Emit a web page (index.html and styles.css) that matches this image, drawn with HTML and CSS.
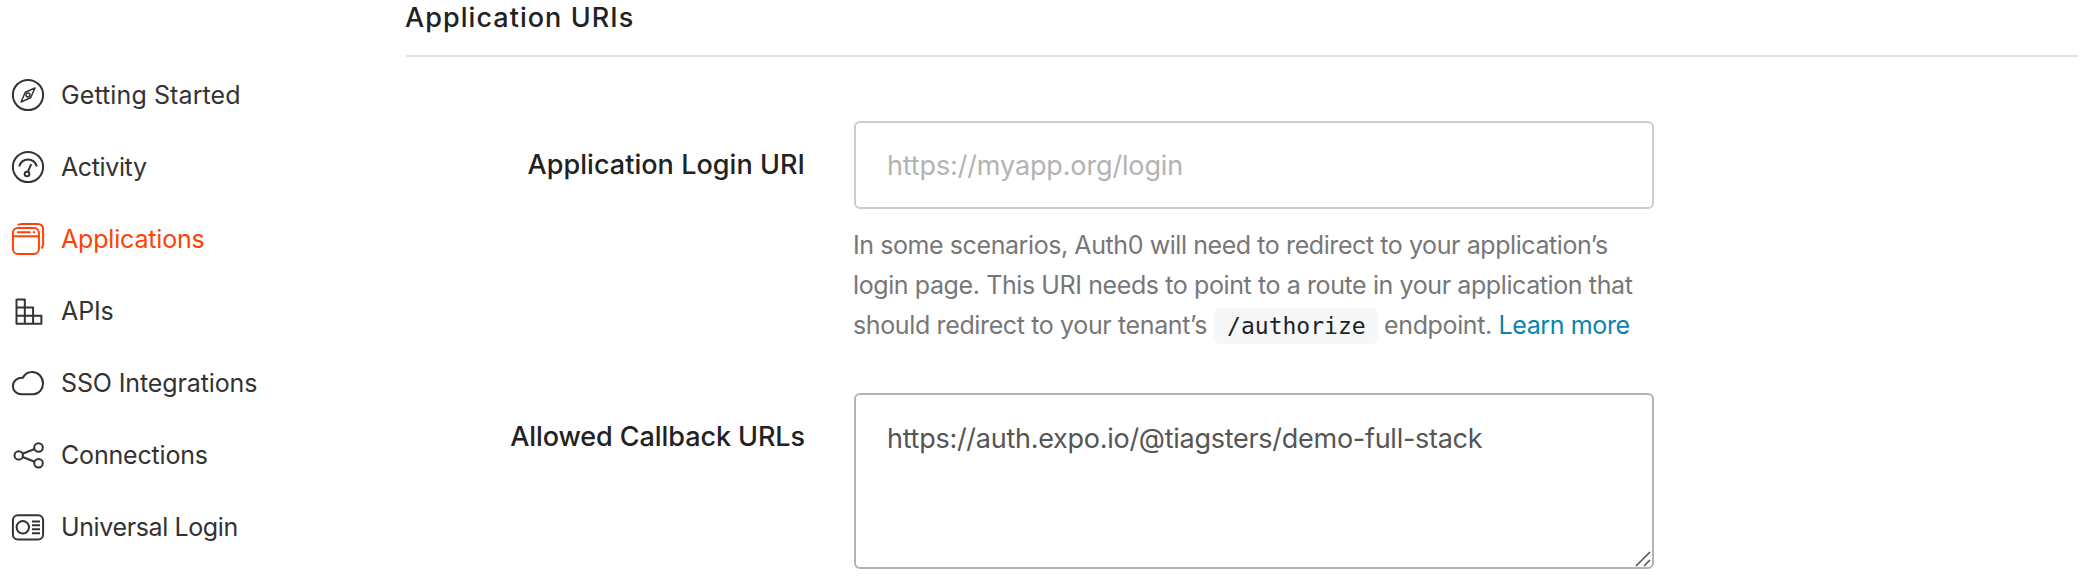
FILE: index.html
```html
<!DOCTYPE html>
<html lang="en">
<head>
<meta charset="utf-8">
<title>Application URIs</title>
<link rel="stylesheet" href="styles.css">
</head>
<body>
<div class="layout">
  <nav class="sidebar">
    <a class="nav-item getting-started"><svg class="icon" viewBox="0 0 34 34"><circle cx="17" cy="17" r="15.1"/><path class="thin" d="M24 10 14.300 14.200 10 24l9.600-4.200z"/><circle class="thin" cx="17" cy="17" r="1.900"/></svg><span>Getting Started</span></a>
    <a class="nav-item activity"><svg class="icon" viewBox="0 0 34 34"><circle cx="17" cy="17" r="15.1"/><path d="M8.200 16.500a9 9 0 0 1 17.600 0M20.200 14.200l-3.300 7.500"/><circle cx="16" cy="24" r="2.300"/></svg><span>Activity</span></a>
    <a class="nav-item applications active"><svg class="icon" viewBox="0 0 34 34"><rect x="1.900" y="6.100" width="26" height="26" rx="5"/><path d="M2 14.200h26M6 10.200h13.500M21.800 10.200h2.200M7 3.300Q8 2 10.500 2H26.500Q32.100 2 32.100 7.500V22.500Q32.100 25 30.300 26.500"/></svg><span>Applications</span></a>
    <a class="nav-item apis"><svg class="icon" viewBox="0 0 34 34"><path d="M5.500 5.500h8.300v24.300M5.500 5v24.800h24.900v-8.100H5.500M5.500 13.600h16.600v16.200"/></svg><span>APIs</span></a>
    <a class="nav-item sso"><svg class="icon" viewBox="0 0 34 34"><path d="M10.500 28.300H22.500C28 28.300 32 23 32 17.600 32 11 27 5.900 21.300 5.900c-4 0-7.500 2-9.400 5.900C6 11.500 1.900 15.200 1.900 20.200c0 4.500 4 8.100 8.600 8.100z"/></svg><span>SSO Integrations</span></a>
    <a class="nav-item connections"><svg class="icon" viewBox="0 0 34 34"><circle cx="7.700" cy="17.400" r="4.200"/><circle cx="27.500" cy="9.500" r="4.300"/><circle cx="27.500" cy="25.300" r="4.300"/><path d="m11.600 15.700 12-4.700M11.600 19l12 4.700"/></svg><span>Connections</span></a>
    <a class="nav-item universal"><svg class="icon" viewBox="0 0 34 34"><rect x="1.900" y="5.200" width="30.200" height="24.200" rx="5"/><circle cx="11.800" cy="17.300" r="6.200"/><path d="M21 11.400h8M21 15.300h8M21 19.300h8M21 23.200h8"/></svg><span>Universal Login</span></a>
  </nav>
  <main class="content">
    <h2 class="section-title">Application URIs</h2>
    <div class="field login-field">
      <label class="label label-login" for="login">Application Login URI</label>
      <div class="control">
        <input class="text-box" id="login" type="text" placeholder="https://myapp.org/login">
        <p class="help"><span class="help-a">In some scenarios, Auth0 will need to redirect to your application’s</span><br><span class="help-b">login page. This URI needs to point to a route in your application that</span><br><span class="help-c">should redirect to your tenant’s</span><code class="code">/authorize</code><span class="help-d">endpoint. <a class="link">Learn more</a></span></p>
      </div>
    </div>
    <div class="field callback-field">
      <label class="label label-callback" for="callback">Allowed Callback URLs</label>
      <div class="control">
        <textarea class="text-box text-area" id="callback" spellcheck="false">https://auth.expo.io/@tiagsters/demo-full-stack</textarea>
        <svg class="grip" viewBox="0 0 16 16"><path d="M1 15 15 1M9 15l6-6"/></svg>
      </div>
    </div>
  </main>
</div>
</body>
</html>
```
FILE: styles.css
```css
* { box-sizing: border-box; }
body { margin: 0; background: #fff; color: #333; font-family: Inter, "Liberation Sans", sans-serif; height: 578px; overflow: hidden; }
.layout { display: flex; height: 578px; }
.sidebar { width: 406px; flex: none; padding: 59px 0 0 11px; }
.nav-item { display: flex; align-items: center; gap: 16px; height: 72px; font-size: 25px; line-height: 36px; white-space: nowrap; letter-spacing: -0.18px; }
.getting-started { letter-spacing: 0.1px; }
.activity, .universal { letter-spacing: -0.38px; }
.apis, .sso { letter-spacing: -0.12px; }
.icon { width: 34px; height: 34px; flex: none; fill: none; stroke: currentColor; stroke-width: 2; stroke-linejoin: round; stroke-linecap: butt; }
.thin { stroke-width: 1.5; }
.active { color: #ff4105; }
.content { width: 1672px; flex: none; }
.section-title { margin: 0; height: 57px; border-bottom: 2px solid #dfdfdf; font-size: 27px; line-height: 36px; font-weight: 500; letter-spacing: 1.05px; text-indent: -1px; color: #222; }
.field { display: flex; gap: 48px; }
.login-field { padding-top: 64px; height: 336px; }
.label { width: 400px; padding: 26px 1px 0 0; text-align: right; font-size: 27px; line-height: 36px; font-weight: 500; color: #222; letter-spacing: 0.05px; white-space: nowrap; }
.label-callback { letter-spacing: -0.08px; }
.control { width: 800px; position: relative; }
.text-box { display: block; width: 800px; height: 88px; margin: 0; padding: 1px 31px 0; border: 2px solid #ccc; border-radius: 6px; background: #fff; color: #555; font: 27px/36px Inter, "Liberation Sans", sans-serif; letter-spacing: -0.14px; outline: none; }
.text-box::placeholder { color: #b3b3b3; opacity: 1; }
.text-area { height: 176px; padding: 26px 31px; border-color: #b3b3b3; resize: none; overflow: hidden; letter-spacing: -0.27px; }
.help { margin: 16px 0 0 -1px; font-size: 25px; line-height: 40px; color: #777; white-space: nowrap; letter-spacing: -0.4px; }
.help-a { letter-spacing: -0.42px; }
.help-c { letter-spacing: -0.37px; }
.help-d { letter-spacing: -0.38px; }
.code { display: inline-block; width: 164px; height: 36px; margin: 0 6px 0 7px; padding-left: 13px; border-radius: 6px; background: #f5f7f9; color: #222; font: 23px/36px "DejaVu Sans Mono", monospace; letter-spacing: 0; vertical-align: baseline; }
.link { color: #0a84ae; }
.grip { position: absolute; right: 3px; bottom: 2px; width: 16px; height: 16px; fill: none; stroke: #555; stroke-width: 1.6; }
.callback-field .control { height: 176px; }
```
